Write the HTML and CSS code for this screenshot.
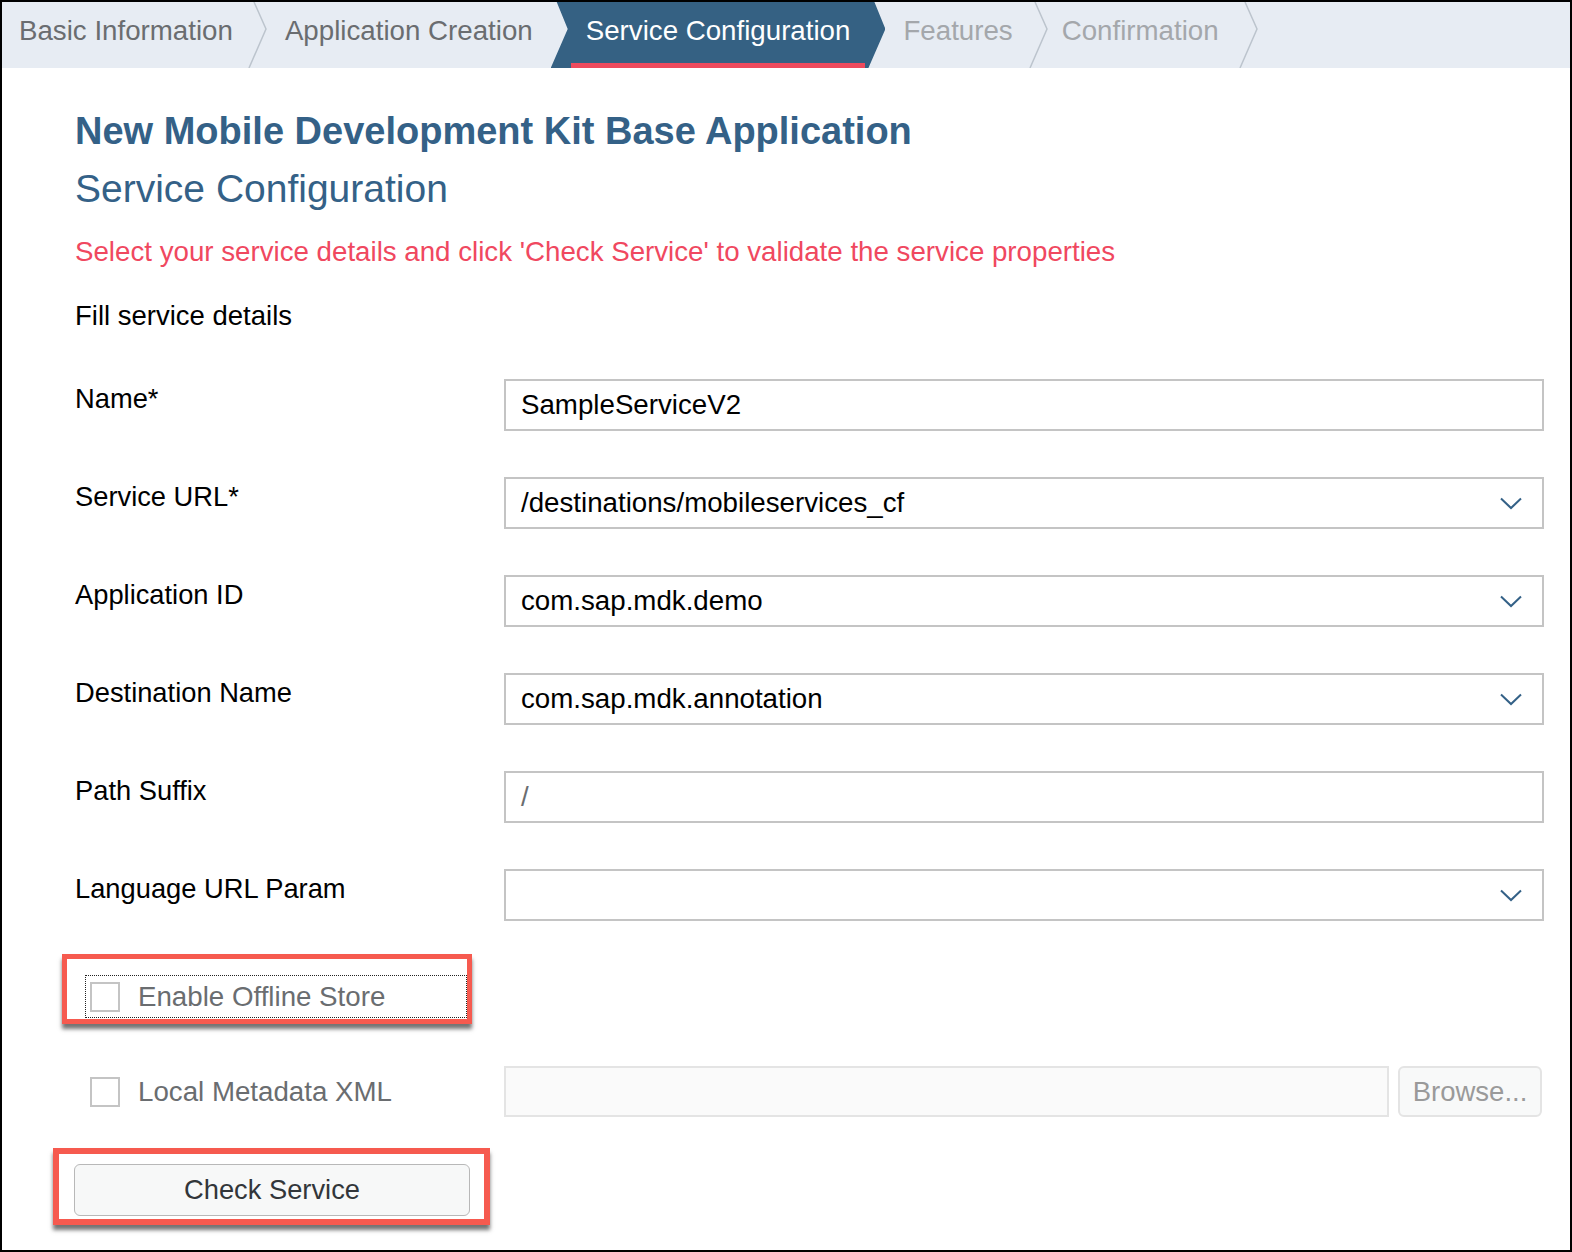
FILE: index.html
```html
<!DOCTYPE html>
<html lang="en">
<head>
<meta charset="utf-8">
<title>Service Configuration</title>
<link rel="stylesheet" href="styles.css">
</head>
<body>
<div class="frame">
  <nav class="steps">
    <div class="step done first">Basic Information</div>
    <svg class="sep" width="20" height="66" viewBox="0 0 20 66"><polyline points="6,0 18,27 1,66" fill="none" stroke="#bcc4cd" stroke-width="1.5"/></svg>
    <div class="step done second">Application Creation</div>
    <div class="step active">Service Configuration<span class="underline"></span></div>
    <div class="step todo third">Features</div>
    <svg class="sep" width="20" height="66" viewBox="0 0 20 66"><polyline points="6,0 18,27 1,66" fill="none" stroke="#bcc4cd" stroke-width="1.5"/></svg>
    <div class="step todo fourth">Confirmation</div>
    <svg class="sep" width="20" height="66" viewBox="0 0 20 66"><polyline points="6,0 18,27 1,66" fill="none" stroke="#bcc4cd" stroke-width="1.5"/></svg>
  </nav>

  <main class="content">
    <h1 class="title">New Mobile Development Kit Base Application</h1>
    <h2 class="subtitle">Service Configuration</h2>
    <p class="hint">Select your service details and click 'Check Service' to validate the service properties</p>
    <p class="section">Fill service details</p>

    <div class="form">
      <div class="label">Name*</div>
      <div class="field"><span class="value">SampleServiceV2</span></div>

      <div class="label">Service URL*</div>
      <div class="field"><span class="value">/destinations/mobileservices_cf</span><svg class="chev" width="22" height="13" viewBox="0 0 22 13"><polyline points="1,1.5 11,11 21,1.5" fill="none" stroke="#346187" stroke-width="2"/></svg></div>

      <div class="label">Application ID</div>
      <div class="field"><span class="value">com.sap.mdk.demo</span><svg class="chev" width="22" height="13" viewBox="0 0 22 13"><polyline points="1,1.5 11,11 21,1.5" fill="none" stroke="#346187" stroke-width="2"/></svg></div>

      <div class="label">Destination Name</div>
      <div class="field"><span class="value">com.sap.mdk.annotation</span><svg class="chev" width="22" height="13" viewBox="0 0 22 13"><polyline points="1,1.5 11,11 21,1.5" fill="none" stroke="#346187" stroke-width="2"/></svg></div>

      <div class="label">Path Suffix</div>
      <div class="field"><span class="value placeholder">/</span></div>

      <div class="label">Language URL Param</div>
      <div class="field"><span class="value"></span><svg class="chev" width="22" height="13" viewBox="0 0 22 13"><polyline points="1,1.5 11,11 21,1.5" fill="none" stroke="#346187" stroke-width="2"/></svg></div>
    </div>

    <div class="highlight offline">
      <div class="focus">
        <span class="box"></span>
        <span class="check-label">Enable Offline Store</span>
      </div>
    </div>

    <div class="local-row">
      <div class="local-check">
        <span class="box"></span>
        <span class="check-label">Local Metadata XML</span>
      </div>
      <div class="local-file">
        <div class="file-input"></div>
        <div class="browse">Browse...</div>
      </div>
    </div>

    <div class="highlight check">
      <div class="check-btn">Check Service</div>
    </div>
  </main>
</div>
</body>
</html>
```

FILE: styles.css
```css
html, body {
  margin: 0;
  padding: 0;
  background: #fff;
}

.frame {
  width: 1572px;
  height: 1252px;
  box-sizing: border-box;
  border: 2px solid #000;
  background: #fff;
  display: flex;
  flex-direction: column;
  font-family: "Liberation Sans", Arial, sans-serif;
  overflow: hidden;
}

/* ---------- step bar ---------- */
.steps {
  height: 66px;
  flex: 0 0 66px;
  background: #e7ecf3;
  display: flex;
  align-items: stretch;
  font-size: 27.7px;
}

.step {
  display: flex;
  align-items: center;
  white-space: nowrap;
  box-sizing: border-box;
  padding-bottom: 9px;
}

.step.done { color: #6a6d70; }
.step.todo { color: #a4a7ab; }

.step.first { padding-left: 17px; padding-right: 15px; }
.step.second { padding-left: 17px; padding-right: 18px; }
.step.third { padding-left: 18px; padding-right: 16px; }
.step.fourth { padding-left: 13px; padding-right: 20px; }

.sep {
  display: block;
  flex: 0 0 20px;
}

.step.active {
  position: relative;
  background: #356183;
  color: #fff;
  padding-left: 35px;
  padding-right: 35px;
  clip-path: polygon(6px 0, calc(100% - 11px) 0, 100% 27px, calc(100% - 17px) 100%, 0 100%, 17px 27px);
}

.underline {
  position: absolute;
  left: 20px;
  right: 20px;
  bottom: 0;
  height: 5px;
  background: #ee4a5d;
}

/* ---------- content ---------- */
.content {
  padding: 41px 26px 0 73px;
}

.title {
  margin: 0;
  font-size: 38px;
  line-height: 44px;
  font-weight: bold;
  color: #346187;
}

.subtitle {
  margin: 14px 0 0;
  font-size: 39px;
  line-height: 44px;
  font-weight: normal;
  color: #346187;
}

.hint {
  margin: 24px 0 0;
  font-size: 27.7px;
  line-height: 34px;
  color: #f0485f;
}

.section {
  margin: 30px 0 0;
  font-size: 27.5px;
  line-height: 34px;
  color: #000;
}

.form {
  margin-top: 46px;
  display: grid;
  grid-template-columns: 429px 1fr;
  grid-auto-rows: 52px;
  row-gap: 46px;
}

.label {
  font-size: 27.3px;
  line-height: 30px;
  padding-top: 5px;
  color: #000;
}

.field {
  box-sizing: border-box;
  height: 52px;
  border: 2px solid #c4c4c4;
  background: #fff;
  display: flex;
  align-items: center;
  padding: 0 20px 0 15px;
}

.value {
  flex: 1;
  font-size: 27.7px;
  color: #000;
  white-space: nowrap;
}

.value.placeholder {
  color: #6a6d70;
}

.chev {
  display: block;
  flex: 0 0 22px;
}

/* ---------- highlight annotations ---------- */
.highlight {
  box-sizing: border-box;
  border: 5px solid #f65a4f;
  box-shadow: 0 5px 4px rgba(0, 0, 0, 0.55);
}

.highlight.offline {
  margin: 33px 0 0 -13px;
  width: 410px;
  height: 70px;
  padding: 16px 0 0 18px;
}

.focus {
  box-sizing: border-box;
  height: 43px;
  border: 1px dotted #222;
  border-bottom-width: 1px;
  display: flex;
  align-items: center;
  gap: 18px;
  padding-left: 4px;
}

.box {
  display: block;
  box-sizing: border-box;
  width: 30px;
  height: 30px;
  border: 2px solid #c4c4c4;
  background: #fff;
  flex: 0 0 30px;
}

.check-label {
  font-size: 27.7px;
  color: #6a6d70;
  white-space: nowrap;
}

.local-row {
  margin-top: 42px;
  display: grid;
  grid-template-columns: 429px 1fr;
  height: 51px;
}

.local-check {
  display: flex;
  align-items: center;
  gap: 18px;
  padding-left: 15px;
}

.local-file {
  display: flex;
  gap: 9px;
  padding-right: 2px;
}

.file-input {
  flex: 1;
  box-sizing: border-box;
  border: 2px solid #e4e4e4;
  background: #fafafa;
}

.browse {
  flex: 0 0 144px;
  box-sizing: border-box;
  border: 2px solid #e4e4e4;
  border-radius: 6px;
  background: #f8f9f9;
  color: #9a9a9a;
  font-size: 27.5px;
  display: flex;
  align-items: center;
  justify-content: center;
}

.highlight.check {
  margin: 31px 0 0 -22px;
  width: 437px;
  height: 77px;
  border-width: 6px;
  padding: 10px 0 0 15px;
}

.check-btn {
  box-sizing: border-box;
  width: 396px;
  height: 52px;
  border: 1px solid #b8b8b8;
  border-radius: 6px;
  background: #f7f8f8;
  color: #32363a;
  font-size: 27.3px;
  display: flex;
  align-items: center;
  justify-content: center;
}
```
